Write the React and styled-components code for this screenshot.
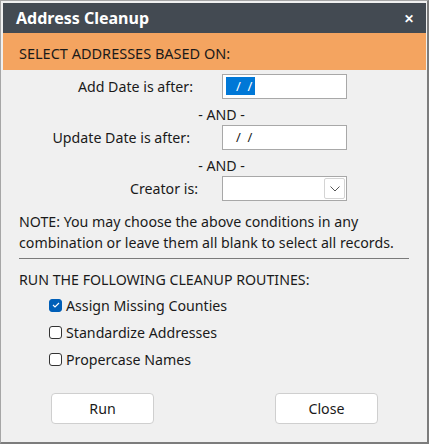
import React, { useState } from 'react'
import styled, { createGlobalStyle } from 'styled-components'

const GlobalStyle = createGlobalStyle`
    html, body {
        margin: 0;
        padding: 0;
        background: #f0f0f0;
    }
    body {
        font-family: "Noto Sans", "Open Sans", sans-serif;
    }
`

const App = () => {
    const [routines, setRoutines] = useState({ counties: true, addresses: false, names: false })

    const toggle = key => setRoutines(r => ({ ...r, [key]: !r[key] }))

    return (
        <>
            <GlobalStyle />
            <Window>
                <TitleBar>
                    <Title>Address Cleanup</Title>
                    <CloseX>✕</CloseX>
                </TitleBar>
                <Banner>SELECT ADDRESSES BASED ON:</Banner>
                <Body>
                    <FieldRow>
                        <Label>Add Date is after:</Label>
                        <DateBox>
                            <DateText selected>/  /</DateText>
                        </DateBox>
                    </FieldRow>
                    <And>- AND -</And>
                    <FieldRow>
                        <Label shift={3}>Update Date is after:</Label>
                        <DateBox>
                            <DateText>/  /</DateText>
                        </DateBox>
                    </FieldRow>
                    <And>- AND -</And>
                    <FieldRow>
                        <Label shift={-5}>Creator is:</Label>
                        <SelectBox>
                            <DropButton>
                                <svg width="10" height="6" viewBox="0 0 10 6">
                                    <path d="M0.5 0.5 L5 5 L9.5 0.5" fill="none" stroke="#555" strokeWidth="1" />
                                </svg>
                            </DropButton>
                        </SelectBox>
                    </FieldRow>
                    <Note>
                        NOTE: You may choose the above conditions in any combination or leave them all blank to select all records.
                    </Note>
                    <Divider />
                    <Heading>RUN THE FOLLOWING CLEANUP ROUTINES:</Heading>
                    <Checks>
                        <CheckRow onClick={() => toggle('counties')}>
                            <Box checked={routines.counties}>
                                {routines.counties && (
                                    <svg width="8" height="6" viewBox="0 0 8 6">
                                        <path d="M1 3 L3 5 L7 1" fill="none" stroke="#fff" strokeWidth="1.1" />
                                    </svg>
                                )}
                            </Box>
                            Assign Missing Counties
                        </CheckRow>
                        <CheckRow onClick={() => toggle('addresses')}>
                            <Box checked={routines.addresses} />
                            Standardize Addresses
                        </CheckRow>
                        <CheckRow onClick={() => toggle('names')}>
                            <Box checked={routines.names} />
                            Propercase Names
                        </CheckRow>
                    </Checks>
                    <Buttons>
                        <Button>Run</Button>
                        <Button>Close</Button>
                    </Buttons>
                </Body>
            </Window>
        </>
    )
}

const Window = styled.div`
    box-sizing: border-box;
    width: 429px;
    height: 444px;
    background: #f0f0f0;
    border-top: 1px solid #a6a6a6;
    border-left: 1px solid #a6a6a6;
    border-right: 2px solid #7c7c7c;
    border-bottom: 2px solid #7c7c7c;
    padding: 2px 1px 1px 2px;
    display: flex;
    flex-direction: column;
`

const TitleBar = styled.div`
    height: 30px;
    background: #434a52;
    display: flex;
    align-items: center;
    justify-content: space-between;
    padding: 0 12px 0 13px;
`

const Title = styled.div`
    color: #fff;
    font-weight: 700;
    font-size: 16px;
`

const CloseX = styled.div`
    color: #fff;
    font-size: 12px;
    font-weight: 700;
`

const Banner = styled.div`
    height: 37px;
    background: #f4a460;
    color: #1a1a1a;
    font-size: 14.5px;
    display: flex;
    align-items: center;
    padding: 2px 0 0 16px;
    box-sizing: border-box;
`

const Body = styled.div`
    display: flex;
    flex-direction: column;
    padding: 4px 17px 0 16px;
    color: #1a1a1a;
    font-size: 14.2px;
`

const FieldRow = styled.div`
    display: grid;
    grid-template-columns: 203px 125px;
    align-items: center;
`

const Label = styled.div`
    text-align: right;
    padding-right: ${p => 29 + (p.shift || 0)}px;
`

const DateBox = styled.div`
    box-sizing: border-box;
    height: 25px;
    background: #fff;
    border: 1px solid #a8a8a8;
    padding: 2px 3px;
    display: flex;
`

const DateText = styled.span`
    box-sizing: border-box;
    background: ${p => p.selected ? '#0078d7' : 'transparent'};
    color: ${p => p.selected ? '#fff' : '#1a1a1a'};
    width: 29px;
    height: 18px;
    line-height: 18px;
    padding-left: 10px;
    font-size: 13px;
    white-space: pre;
`

const And = styled.div`
    text-align: center;
    height: 26px;
    line-height: 26px;
    padding: 3px 0 0 15px;
    box-sizing: border-box;
`

const SelectBox = styled.div`
    box-sizing: border-box;
    height: 25px;
    background: #fff;
    border: 1px solid #a8a8a8;
    display: flex;
    justify-content: flex-end;
    padding: 1px;
`

const DropButton = styled.div`
    box-sizing: border-box;
    width: 21px;
    height: 21px;
    border: 1px solid #d4d4d4;
    border-radius: 2px;
    background: #fff;
    display: flex;
    align-items: center;
    justify-content: center;
`

const Note = styled.div`
    margin-top: 10px;
    line-height: 21px;
`

const Divider = styled.div`
    height: 1px;
    background: #7a7a7a;
    margin: 5px 0 0 0;
`

const Heading = styled.div`
    margin-top: 11px;
    line-height: 20px;
`

const Checks = styled.div`
    display: flex;
    flex-direction: column;
    padding-left: 30px;
    margin-top: 5px;
    gap: 7px;
`

const CheckRow = styled.label`
    display: flex;
    align-items: center;
    gap: 4px;
    height: 20px;
    cursor: default;
`

const Box = styled.span`
    box-sizing: border-box;
    width: 13px;
    height: 13px;
    border-radius: 3px;
    border: 1px solid ${p => p.checked ? '#005fb8' : '#333'};
    background: ${p => p.checked ? '#005fb8' : '#fff'};
    display: flex;
    align-items: center;
    justify-content: center;
`

const Buttons = styled.div`
    display: flex;
    justify-content: space-between;
    padding: 0 31px 0 32px;
    margin-top: 24px;
`

const Button = styled.button`
    width: 103px;
    height: 31px;
    background: #fff;
    border: 1px solid #cfcfcf;
    border-radius: 4px;
    font-family: inherit;
    font-size: 14.2px;
    color: #1a1a1a;
`

export default App
